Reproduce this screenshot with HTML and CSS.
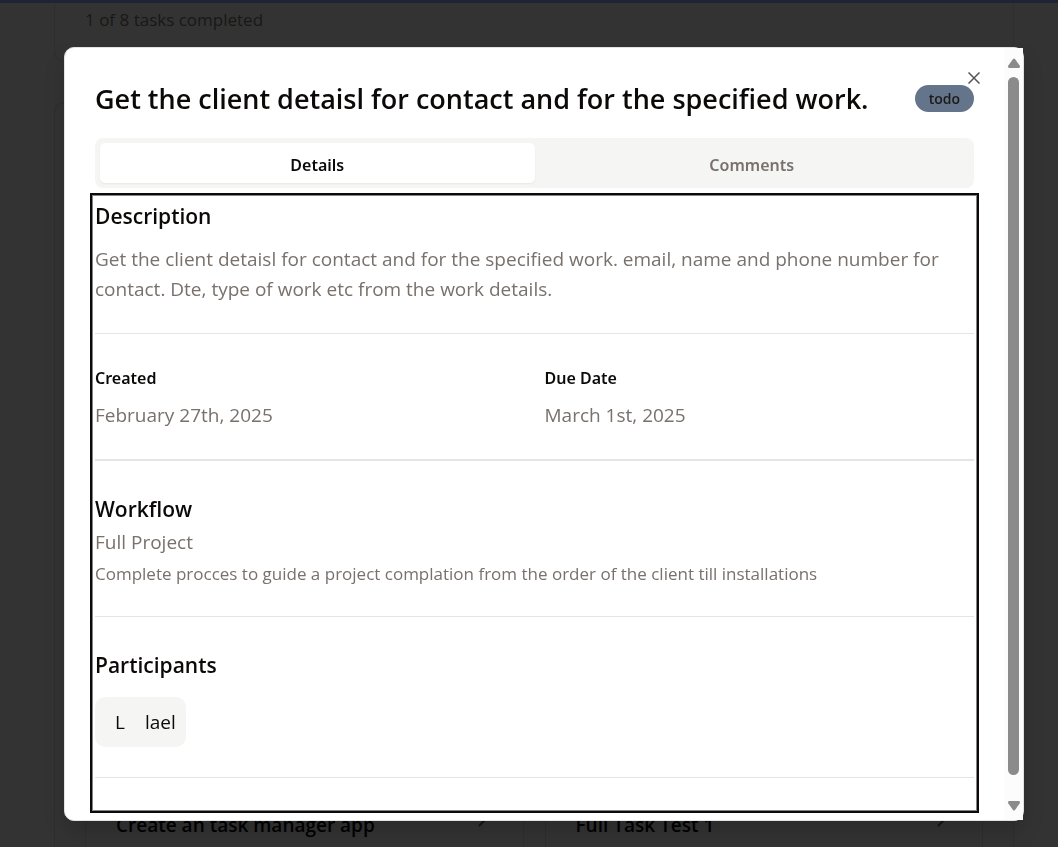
FILE: index.html
```html
<!DOCTYPE html>
<html lang="en">
<head>
<meta charset="utf-8">
<title>Task details</title>
<link rel="stylesheet" href="styles.css">
</head>
<body>
<main class="page">
  <section class="summary"><p class="progress">1 of 8 tasks completed</p></section>
  <section class="board">
    <article class="task"><h3>Create an task manager app</h3>
      <svg class="chevron" viewBox="0 0 10 16" aria-hidden="true"><path d="M2 2l6 6-6 6"/></svg></article>
    <article class="task"><h3>Full Task Test 1</h3>
      <svg class="chevron" viewBox="0 0 10 16" aria-hidden="true"><path d="M2 2l6 6-6 6"/></svg></article>
  </section>
</main>
<div class="overlay">
  <div class="dialog" role="dialog" aria-modal="true" aria-labelledby="title">
    <div class="content">
      <header class="header">
        <h1 id="title">Get the client detaisl for contact and for the specified work.</h1>
        <span class="badge">todo</span>
      </header>
      <div class="tabs" role="tablist">
        <button class="tab active" type="button" role="tab" id="tab-details" aria-selected="true" aria-controls="details">Details</button>
        <button class="tab" type="button" role="tab" aria-selected="false">Comments</button>
      </div>
      <div class="panel" role="tabpanel" id="details" aria-labelledby="tab-details" tabindex="0">
        <section class="section description">
          <h2>Description</h2>
          <p>Get the client detaisl for contact and for the specified work. email, name and phone number for contact. Dte, type of work etc from the work details.</p>
        </section>
        <hr>
        <section class="section dates">
          <div><h3>Created</h3><p>February 27th, 2025</p></div>
          <div><h3>Due Date</h3><p>March 1st, 2025</p></div>
        </section>
        <hr class="strong">
        <section class="section workflow">
          <h2>Workflow</h2>
          <p>Full Project</p>
          <p class="note">Complete procces to guide a project complation from the order of the client till installations</p>
        </section>
        <hr>
        <section class="section participants">
          <h2>Participants</h2>
          <div class="person"><span class="avatar">L</span><span>lael</span></div>
        </section>
        <hr>
      </div>
    </div>
    <div class="scrollbar" aria-hidden="true">
      <svg viewBox="0 0 12 10"><path d="M5 1Q6 0 7 1L12 8Q12 10 11 10H1Q0 10 0 8Z"/></svg>
      <div class="thumb"></div>
      <svg viewBox="0 0 12 10"><path d="M5 9Q6 10 7 9L12 2Q12 0 11 0H1Q0 0 0 2Z"/></svg>
    </div>
    <button class="close" type="button" aria-label="Close">
      <svg viewBox="0 0 12 12"><path d="M.5.5l11 11M11.500.5l-11 11"/></svg>
    </button>
  </div>
</div>
</body>
</html>
```
FILE: styles.css
```css
* { box-sizing: border-box; }
body, h1, h2, h3, p { margin: 0; }
body {
  background: #333;
  color: #0c0a09;
  font: 19px/30px "Open Sans", "Noto Sans", sans-serif;
  overflow: hidden;
}
h1, h2, h3 { font-weight: 600; }

.page {
  height: 100vh;
  display: flex;
  flex-direction: column;
  padding: 0 44px 0 54px;
  border-top: 3px solid #1e2433;
}
.summary {
  height: 59px;
  padding: 2px 30px;
  border: 1px solid #2e2e2e;
  border-top: 0;
  border-radius: 0 0 10px 10px;
}
.progress { color: #191817; font-size: 17px; }
.board {
  flex: 1;
  display: grid;
  grid-template-columns: 1fr 1fr;
  gap: 21px;
  margin-top: 40px;
  padding: 600px 30px 0;
  border: 1px solid #2e2e2e;
  border-bottom: 0;
  border-radius: 10px 10px 0 0;
}
.task {
  display: flex;
  justify-content: space-between;
  align-items: flex-end;
  padding: 0 36px 7px 30px;
  border: solid #2e2e2e;
  border-width: 0 1px;
}
.task h3 { color: #020202; font-size: 19px; }
.chevron {
  width: 10px;
  height: 16px;
  margin-bottom: 12px;
  fill: none;
  stroke: #151515;
  stroke-width: 2;
}

.overlay {
  position: fixed;
  inset: 0;
  display: flex;
  padding: 47px 34px 26px 64px;
}
.dialog {
  position: relative;
  flex: 1;
  display: flex;
  background: #fff;
  border: 1px solid #e2e2e2;
  border-radius: 10px;
  box-shadow: 0 12px 20px rgba(0, 0, 0, .15);
}
.content {
  flex: 1;
  min-width: 0;
  display: flex;
  flex-direction: column;
  padding: 30px 30px 12px;
}
.header {
  display: flex;
  align-items: center;
  justify-content: space-between;
  height: 42px;
}
h1 { font-size: 27px; line-height: 42px; white-space: nowrap; }
.badge {
  margin-bottom: 2px;
  padding: 0 14px;
  border-radius: 14px;
  background: #64748b;
  color: #1c1917;
  font-size: 14px;
  font-weight: 600;
  line-height: 27px;
}
.close {
  position: absolute;
  top: 20px;
  right: 39px;
  display: flex;
  padding: 4px;
  border: 0;
  background: none;
}
.close svg { width: 12px; height: 12px; fill: none; stroke: #555; stroke-width: 1.5; }
.tabs {
  display: grid;
  grid-template-columns: 1fr 1fr;
  height: 50px;
  margin: 18px 0 10px;
  padding: 5px;
  border-radius: 8px;
  background: #f5f5f4;
}
.tab {
  padding: 3px 6px 0;
  border: 0;
  border-radius: 5px;
  background: none;
  color: #78716c;
  font: 600 16px/24px "Noto Sans", sans-serif;
}
.tab.active { background: #fff; color: #0c0a09; box-shadow: 0 1px 2px rgba(0, 0, 0, .06); }

.panel {
  flex: 1;
  min-height: 0;
  outline: 2px solid #0c0a09;
  outline-offset: 3px;
  box-shadow: 0 0 0 2px #fff, 0 0 0 3px #858483;
}
.panel p { color: #78716c; }
h2 { font-size: 21px; line-height: 36px; }
hr { margin: 0; border: 0; border-top: 1px solid #e5e5e5; }
hr.strong { border-top-width: 2px; }
.section { padding: 30px 0; }
.description { padding-top: 0; padding-bottom: 29px; }
.description p { margin-top: 10px; }
.dates { display: grid; grid-template-columns: 1fr 1fr; gap: 20px; padding-bottom: 29px; }
.dates h3 { font-family: "Noto Sans", sans-serif; font-size: 16px; line-height: 28px; }
.dates p { margin-top: 8px; }
.workflow p { line-height: 30px; }
.workflow .note { font-size: 17px; line-height: 24px; margin-top: 5px; }
.person {
  display: flex;
  align-items: center;
  gap: 10px;
  width: fit-content;
  height: 50px;
  margin-top: 14px;
  padding: 0 10px;
  border-radius: 10px;
  background: #f5f5f4;
}
.avatar { width: 30px; text-align: center; }

.scrollbar {
  width: 19px;
  display: flex;
  flex-direction: column;
  align-items: center;
  gap: 9px;
  padding: 10px 0 9px;
  background: #fcfcfc;
}
.scrollbar svg { width: 12px; height: 10px; fill: #8b8b8b; }
.thumb { flex: 1; width: 11px; margin-bottom: 17px; border-radius: 6px; background: #8b8b8b; }
```
